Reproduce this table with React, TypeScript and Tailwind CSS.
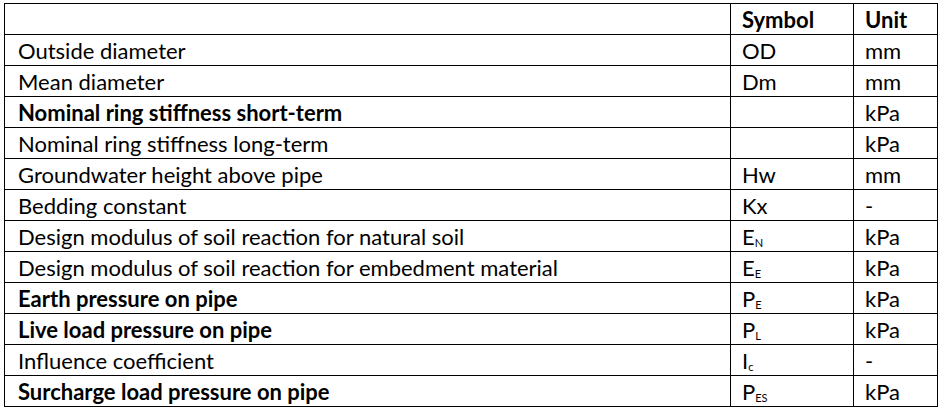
const ROWS: { label: string; bold?: boolean; sym?: [string, string?]; unit: string }[] = [
  { label: 'Outside diameter', sym: ['OD'], unit: 'mm' },
  { label: 'Mean diameter', sym: ['Dm'], unit: 'mm' },
  { label: 'Nominal ring stiffness short-term', bold: true, unit: 'kPa' },
  { label: 'Nominal ring stiffness long-term', unit: 'kPa' },
  { label: 'Groundwater height above pipe', sym: ['Hw'], unit: 'mm' },
  { label: 'Bedding constant', sym: ['Kx'], unit: '-' },
  { label: 'Design modulus of soil reaction for natural soil', sym: ['E', 'N'], unit: 'kPa' },
  { label: 'Design modulus of soil reaction for embedment material', sym: ['E', 'E'], unit: 'kPa' },
  { label: 'Earth pressure on pipe', bold: true, sym: ['P', 'E'], unit: 'kPa' },
  { label: 'Live load pressure on pipe', bold: true, sym: ['P', 'L'], unit: 'kPa' },
  { label: 'Influence coefficient', sym: ['I', 'c'], unit: '-' },
  { label: 'Surcharge load pressure on pipe', bold: true, sym: ['P', 'ES'], unit: 'kPa' },
];

export default function App() {
  return (
    <div className="w-[944px] h-[415px] bg-white pl-[4px] pt-[3px] font-['Lato',sans-serif] text-[22px] text-black">
      <table className="border-collapse table-fixed w-[933px]">
        <colgroup>
          <col className="w-[726px]" />
          <col className="w-[123px]" />
          <col className="w-[84px]" />
        </colgroup>
        <tbody>
          <tr className="h-[31px]">
            <td className="border border-black" />
            <td className="border border-black pl-[11px] pt-[5px] align-top font-bold leading-none">Symbol</td>
            <td className="border border-black pl-[11px] pt-[5px] align-top font-bold leading-none">Unit</td>
          </tr>
          {ROWS.map((r) => (
            <tr key={r.label} className="h-[31px]">
              <td className={`border border-black pl-[13px] pt-[5px] align-top leading-none whitespace-nowrap ${r.bold ? 'font-bold' : ''}`}>{r.label}</td>
              <td className="border border-black pl-[11px] pt-[5px] align-top leading-none">
                {r.sym && (
                  <>
                    {r.sym[0]}
                    {r.sym[1] && <sub className="text-[11px] align-baseline relative top-[2px]">{r.sym[1]}</sub>}
                  </>
                )}
              </td>
              <td className="border border-black pl-[11px] pt-[5px] align-top leading-none">{r.unit}</td>
            </tr>
          ))}
        </tbody>
      </table>
    </div>
  );
}
